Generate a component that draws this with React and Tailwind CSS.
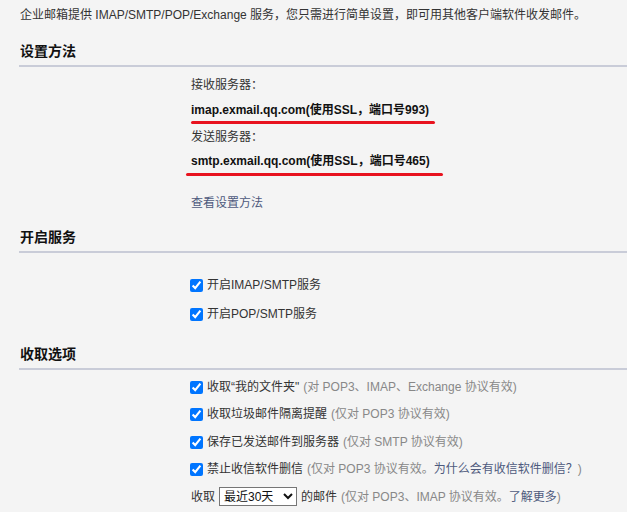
import { useState } from 'react';

const Heading = ({ children, className = '' }) => (
  <div className={`ml-[19px] pl-[1px] pb-[4px] border-b-2 border-[#c9ccd8] text-[14px] leading-[20px] font-bold text-[#111] ${className}`}>
    {children}
  </div>
);

const Check = ({ label, hint, link, className = '' }) => (
  <label className={`flex items-center h-[18px] ml-[-1px] ${className}`}>
    <input type="checkbox" defaultChecked className="w-[13px] h-[13px] accent-[#0075ff]" />
    <span className="ml-[4px] whitespace-nowrap text-[#333]">{label}</span>
    {hint && (
      <span className="ml-[4px] whitespace-nowrap text-[#888]">
        {hint}
        {link && <span className="text-[#4e5a7d]">{link}</span>}
        {link && ')'}
      </span>
    )}
  </label>
);

export default function App() {
  const [days, setDays] = useState('30');

  return (
    <div className="min-h-[512px] w-[627px] overflow-hidden bg-[#f4f4f4] text-[12px] text-[#333] font-['Liberation_Sans','Noto_Sans_CJK_SC',sans-serif]">
      <p className="pt-[7px] pl-[20px] leading-[16px] whitespace-nowrap">
        企业邮箱提供 IMAP/SMTP/POP/Exchange 服务，您只需进行简单设置，即可用其他客户端软件收发邮件。
      </p>

      {/* 设置方法 */}
      <Heading className="mt-[18px]">设置方法</Heading>
      <div className="pl-[191px]">
        <div className="mt-[9px] leading-[18px]">接收服务器：</div>
        <div className="mt-[7px] leading-[18px] font-bold text-[#111]">imap.exmail.qq.com(使用SSL，端口号993)</div>
        <div className="mt-[2px] h-[3px] w-[244px] rounded-full bg-[#e8131f]" />
        <div className="mt-[4px] leading-[18px]">发送服务器：</div>
        <div className="mt-[6px] leading-[18px] font-bold text-[#111]">smtp.exmail.qq.com(使用SSL，端口号465)</div>
        <div className="mt-[3px] ml-[-5px] h-[3px] w-[257px] rounded-full bg-[#e8131f]" />
        <a className="block mt-[18px] leading-[18px] text-[#4e5a7d]">查看设置方法</a>
      </div>

      {/* 开启服务 */}
      <Heading className="mt-[15px]">开启服务</Heading>
      <div className="pl-[191px]">
        <Check className="mt-[23px]" label="开启IMAP/SMTP服务" />
        <Check className="mt-[11px]" label="开启POP/SMTP服务" />
      </div>

      {/* 收取选项 */}
      <Heading className="mt-[21px]">收取选项</Heading>
      <div className="pl-[191px]">
        <Check className="mt-[8px]" label="收取“我的文件夹&quot;" hint="(对 POP3、IMAP、Exchange 协议有效)" />
        <Check className="mt-[9px]" label="收取垃圾邮件隔离提醒" hint="(仅对 POP3 协议有效)" />
        <Check className="mt-[10px]" label="保存已发送邮件到服务器" hint="(仅对 SMTP 协议有效)" />
        <Check className="mt-[9px]" label="禁止收信软件删信" hint="(仅对 POP3 协议有效。" link="为什么会有收信软件删信？" />
        <div className="mt-[9px] flex items-center h-[19px] whitespace-nowrap">
          <span>收取</span>
          <select
            value={days}
            onChange={(e) => setDays(e.target.value)}
            className="ml-[4px] w-[78px] h-[19px] border border-[#767676] bg-white text-[12px] text-[#111]"
          >
            <option value="30">最近30天</option>
            <option value="60">最近60天</option>
            <option value="all">全部</option>
          </select>
          <span className="ml-[4px]">的邮件</span>
          <span className="ml-[4px] text-[#888]">
            (仅对 POP3、IMAP 协议有效。<span className="text-[#4e5a7d]">了解更多</span>)
          </span>
        </div>
      </div>
    </div>
  );
}
